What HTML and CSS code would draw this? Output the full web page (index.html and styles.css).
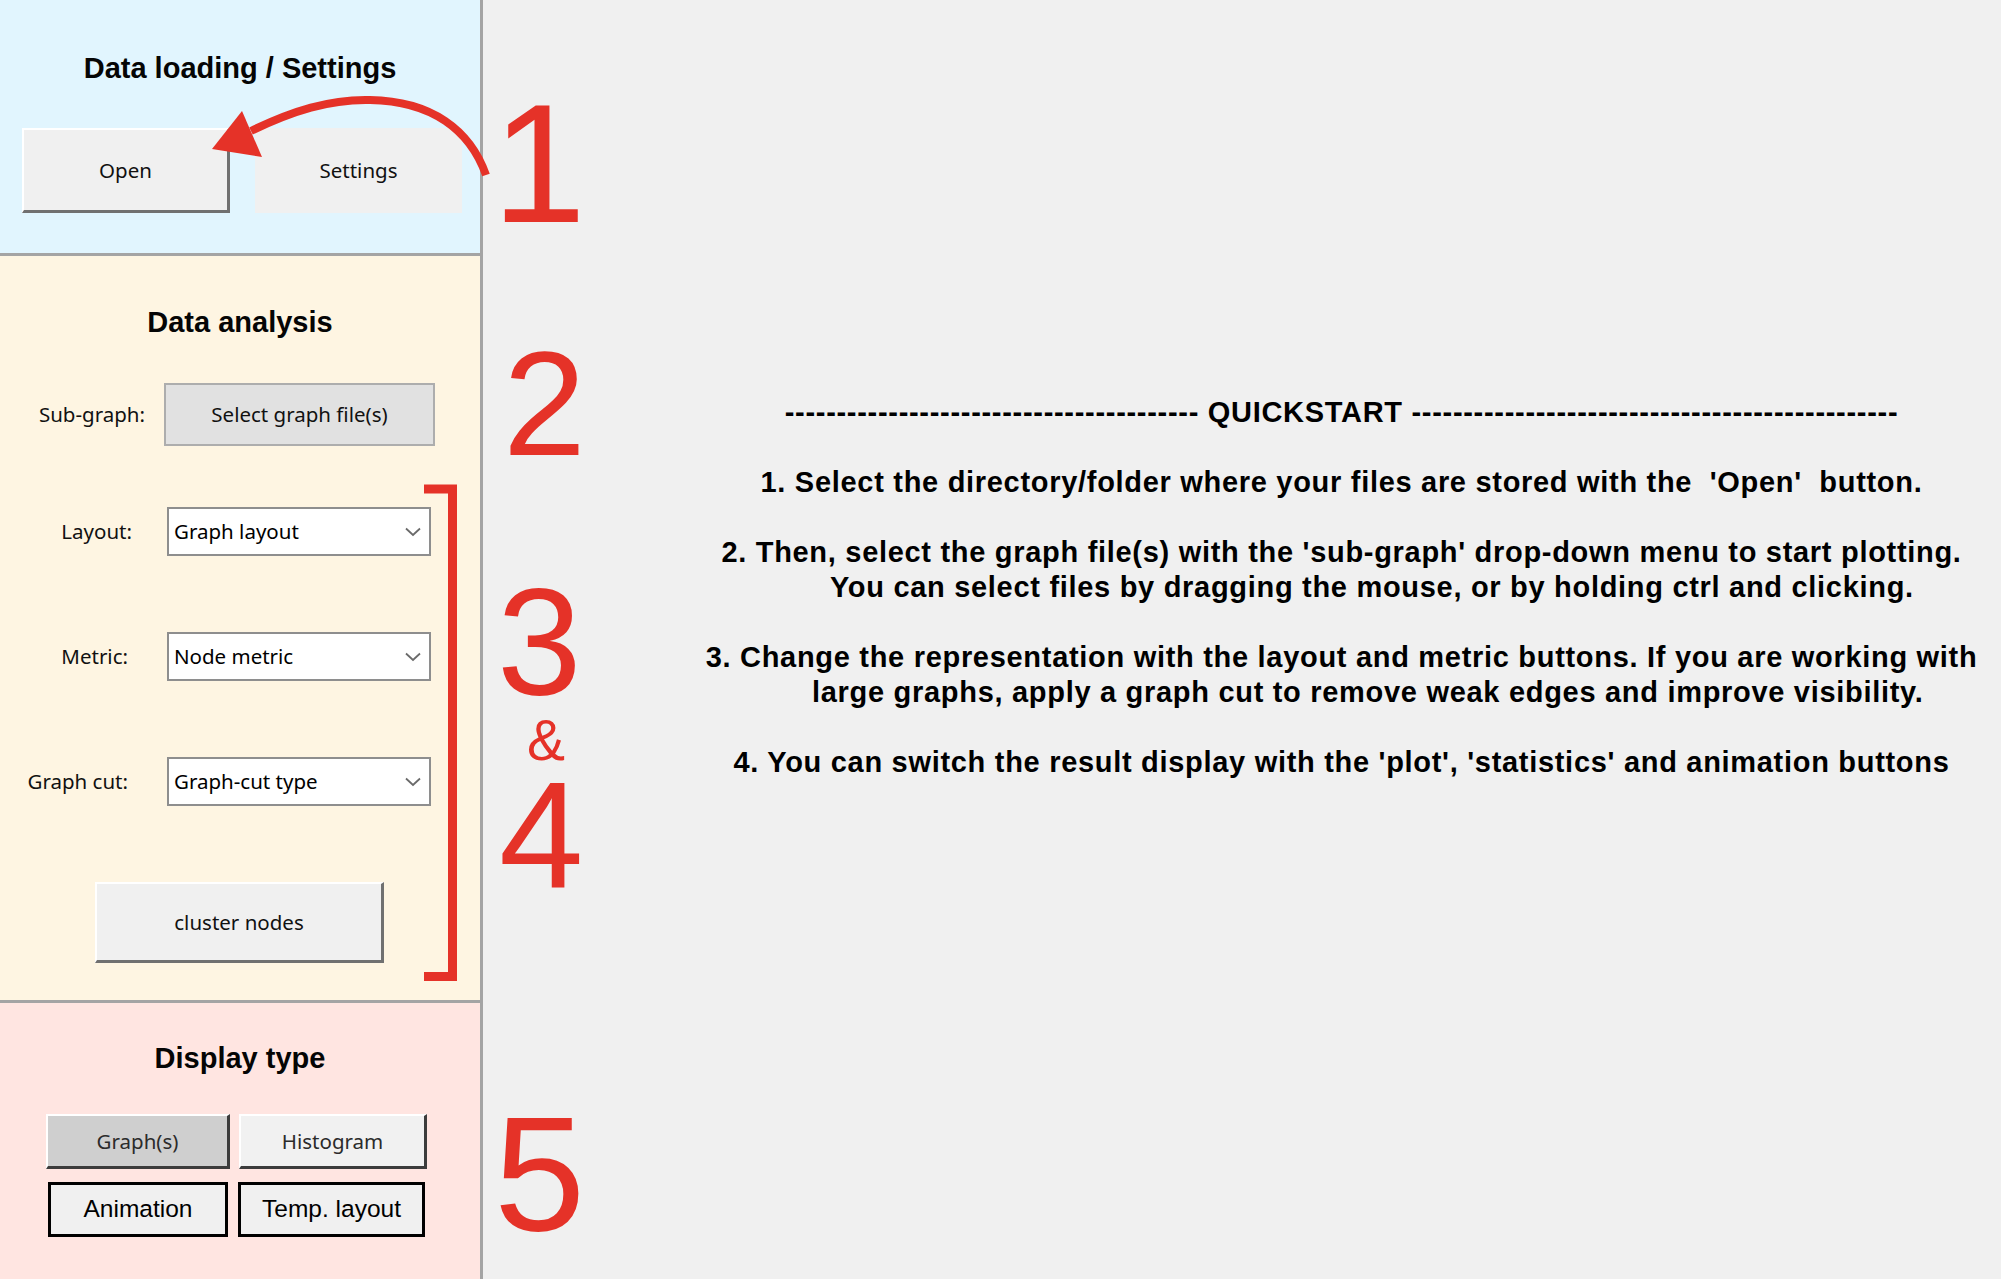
FILE: index.html
```html
<!DOCTYPE html>
<html lang="en">
<head>
<meta charset="utf-8">
<title>Graph tool – Quickstart</title>
<link rel="stylesheet" href="styles.css">
</head>
<body>
<div class="app">
  <aside class="sidebar">
    <section class="panel panel-load">
      <h2 class="panel-title">Data loading / Settings</h2>
      <div class="load-row">
        <button class="btn btn-raised btn-open">Open</button>
        <button class="btn btn-settings">Settings</button>
      </div>
    </section>

    <section class="panel panel-analysis">
      <h2 class="panel-title">Data analysis</h2>
      <div class="field field-sub">
        <span class="field-label">Sub-graph:</span>
        <button class="btn btn-select">Select graph file(s)</button>
      </div>
      <div class="field field-layout">
        <span class="field-label">Layout:</span>
        <div class="combo"><span>Graph layout</span><svg class="chev" width="16" height="10" viewBox="0 0 16 10"><polyline points="1,1.5 8,8 15,1.5" fill="none" stroke="#6a6a6a" stroke-width="1.8"/></svg></div>
      </div>
      <div class="field field-metric">
        <span class="field-label">Metric:</span>
        <div class="combo"><span>Node metric</span><svg class="chev" width="16" height="10" viewBox="0 0 16 10"><polyline points="1,1.5 8,8 15,1.5" fill="none" stroke="#6a6a6a" stroke-width="1.8"/></svg></div>
      </div>
      <div class="field field-cut">
        <span class="field-label">Graph cut:</span>
        <div class="combo"><span>Graph-cut type</span><svg class="chev" width="16" height="10" viewBox="0 0 16 10"><polyline points="1,1.5 8,8 15,1.5" fill="none" stroke="#6a6a6a" stroke-width="1.8"/></svg></div>
      </div>
      <button class="btn btn-raised btn-cluster">cluster nodes</button>
    </section>

    <section class="panel panel-display">
      <h2 class="panel-title">Display type</h2>
      <div class="display-row display-row-1">
        <button class="btn btn-dark btn-graphs">Graph(s)</button>
        <button class="btn btn-dark btn-hist">Histogram</button>
      </div>
      <div class="display-row display-row-2">
        <button class="btn btn-outline btn-anim">Animation</button>
        <button class="btn btn-outline btn-temp">Temp. layout</button>
      </div>
    </section>
  </aside>

  <main class="main">
    <div class="quickstart">
      <p class="qs-line">---------------------------------------- QUICKSTART -----------------------------------------------</p>
      <p class="qs-para">1. Select the directory/folder where your files are stored with the  'Open'  button.</p>
      <p class="qs-para">2. Then, select the graph file(s) with the 'sub-graph' drop-down menu to start plotting.<br>       You can select files by dragging the mouse, or by holding ctrl and clicking.</p>
      <p class="qs-para">3. Change the representation with the layout and metric buttons. If you are working with<br>      large graphs, apply a graph cut to remove weak edges and improve visibility.</p>
      <p class="qs-para">4. You can switch the result display with the 'plot', 'statistics' and animation buttons</p>
    </div>
  </main>

  <svg class="annot" width="2001" height="1279" viewBox="0 0 2001 1279">
    <path d="M486,175 C470,130 432,101 370,100 C330,99 292,111 251,131" fill="none" stroke="#e53228" stroke-width="8" stroke-linecap="butt"/>
    <polygon points="212,149 242,111 262,157" fill="#e53228"/>
    <polyline points="424,489 452.5,489 452.5,976.5 424,976.5" fill="none" stroke="#e53228" stroke-width="9" stroke-linejoin="miter"/>
  </svg>
  <span class="num num-1">1</span>
  <span class="num num-2">2</span>
  <span class="num num-3">3</span>
  <span class="num num-amp">&amp;</span>
  <span class="num num-4">4</span>
  <span class="num num-5">5</span>
</div>
</body>
</html>
```

FILE: styles.css
```css
* { box-sizing: border-box; }

html, body { margin: 0; padding: 0; }

body {
  background: #f0f0f0;
  font-family: "Noto Sans", "Open Sans", sans-serif;
  color: #000;
}

.app {
  position: relative;
  display: flex;
  width: 2001px;
  height: 1279px;
  overflow: hidden;
}

/* ---------- sidebar ---------- */
.sidebar {
  width: 483px;
  flex: none;
  display: flex;
  flex-direction: column;
  border-right: 3px solid #a4a4a4;
}

.panel { border-bottom: 3px solid #a4a4a4; }

.panel-load {
  height: 256px;
  background: #e1f5fe;
  padding-top: 52px;
}

.panel-analysis {
  height: 747px;
  background: #fef5e2;
  padding-top: 50px;
}

.panel-display {
  flex: 1;
  background: #ffe5e1;
  border-bottom: none;
  padding-top: 39px;
}

.panel-title {
  margin: 0;
  font: bold 29px/32px "Liberation Sans", Arial, sans-serif;
  text-align: center;
  color: #050505;
}

/* ---------- buttons ---------- */
.btn {
  margin: 0;
  padding: 0;
  display: flex;
  align-items: center;
  justify-content: center;
  font: 20.5px/1 "Noto Sans", "Open Sans", sans-serif;
  color: #111;
  background: #f0f0f0;
  border: none;
  flex: none;
}

.btn-raised {
  border-style: solid;
  border-width: 2px 3px 3px 2px;
  border-color: #ffffff #707070 #707070 #ffffff;
}

.btn-dark {
  border-style: solid;
  border-width: 2px 3px 3px 2px;
  border-color: #ffffff #3c3c3c #3c3c3c #ffffff;
  color: #2b2b2b;
}

.btn-outline {
  border: 3px solid #000;
  font: 24.5px/1 "Liberation Sans", Arial, sans-serif;
  color: #000;
}

.load-row {
  display: flex;
  gap: 25px;
  margin-top: 44px;
  padding-left: 22px;
}

.btn-open { width: 208px; height: 85px; }
.btn-settings { width: 207px; height: 85px; }

/* ---------- analysis fields ---------- */
.field {
  display: flex;
  align-items: center;
  font-size: 20.5px;
  color: #111;
}

.field-label {
  flex: none;
  text-align: right;
  line-height: 1;
}

.field-sub { margin-top: 45px; }
.field-sub .field-label { width: 145px; }

.btn-select {
  margin-left: 19px;
  width: 271px;
  height: 63px;
  background: #e1e1e1;
  border: 2px solid #adadad;
}

.field-layout { margin-top: 61px; }
.field-layout .field-label { width: 132px; margin-right: 35px; }

.field-metric { margin-top: 76px; }
.field-metric .field-label { width: 128px; margin-right: 39px; }

.field-cut { margin-top: 76px; }
.field-cut .field-label { width: 128px; margin-right: 39px; }

.combo {
  width: 264px;
  height: 49px;
  background: #fff;
  border: 2px solid #8e8e8e;
  display: flex;
  align-items: center;
  justify-content: space-between;
  padding: 0 8px 0 5px;
  color: #000;
  line-height: 1;
}

.chev { flex: none; }

.btn-cluster {
  margin: 76px 0 0 95px;
  width: 289px;
  height: 81px;
}

/* ---------- display type ---------- */
.display-row { display: flex; }

.display-row-1 { margin-top: 40px; padding-left: 46px; gap: 9px; }
.display-row-2 { margin-top: 13px; padding-left: 48px; gap: 10px; }

.btn-graphs { width: 184px; height: 55px; background: #cfcfcf; }
.btn-hist { width: 188px; height: 55px; background: #f1f1f1; }
.btn-anim { width: 180px; height: 55px; }
.btn-temp { width: 187px; height: 55px; }

/* ---------- main area ---------- */
.main {
  flex: 1;
  padding: 395px 0 0 199px;
  display: flex;
  flex-direction: column;
  align-items: center;
}

.quickstart {
  font: bold 29px/35px "Liberation Sans", Arial, sans-serif;
  letter-spacing: 0.7px;
  text-align: center;
  color: #000;
}

.quickstart p {
  margin: 0;
  white-space: pre;
}

.quickstart .qs-para { margin-top: 35px; }

/* ---------- annotations ---------- */
.annot {
  position: absolute;
  left: 0;
  top: 0;
  pointer-events: none;
}

.num {
  position: absolute;
  font-family: "Liberation Sans", Arial, sans-serif;
  font-weight: normal;
  line-height: 0.75;
  color: #e53228;
}

.num-1 { font-size: 169px; left: 492px; top: 101px; }
.num-2 { font-size: 149px; left: 503px; top: 348px; }
.num-3 { font-size: 152px; left: 497px; top: 585px; }
.num-amp { font-size: 57px; left: 527px; top: 719px; }
.num-4 { font-size: 152px; left: 499px; top: 778px; }
.num-5 { font-size: 164px; left: 494px; top: 1112px; }
```
